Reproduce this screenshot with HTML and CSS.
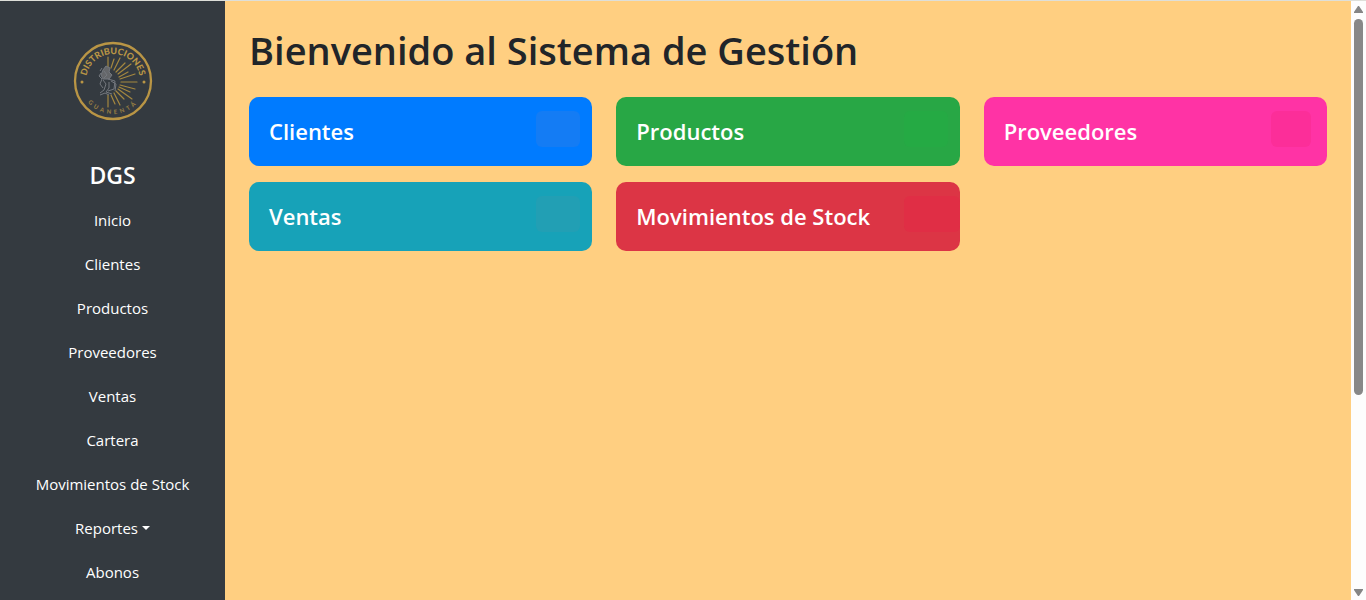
FILE: index.html
```
<!DOCTYPE html>
<html lang="es">
<head>
  <meta charset="UTF-8" />
  <meta name="viewport" content="width=device-width, initial-scale=1.0" />
  <title>Sistema de Gestión</title>
  <link rel="stylesheet" href="styles.css">
</head>
<body>
  <nav class="sidebar">
    <svg class="logo" viewBox="0 0 80 80" role="img" aria-label="Distribuciones Guanentá">
      <defs>
        <path id="arco-sup" d="M13 40 A27 27 0 0 1 67 40" />
        <path id="arco-inf" d="M7 40 A33 33 0 0 0 73 40" />
      </defs>
      <circle cx="40" cy="40" r="38" fill="none" stroke="#b99545" stroke-width="2.3" />
      <text class="logo-nombre"><textPath href="#arco-sup" startOffset="50%" text-anchor="middle">DISTRIBUCIONES</textPath></text>
      <text class="logo-lugar"><textPath href="#arco-inf" startOffset="50%" text-anchor="middle">GUANENTÁ</textPath></text>
      <circle cx="9" cy="41" r="1.5" fill="#b99545" />
      <circle cx="71" cy="41" r="1.5" fill="#b99545" />
      <!-- rayos -->
      <g stroke="#a4873f" stroke-width="1.2" stroke-linecap="round">
        <path d="M35 26V16M38 27L41 18M41 29L47 17M43 31L52 22M45 33L58 23M46 36L55 31M47 38L62 33M48 41H64M47 44L62 48M46 46L57 51M45 48L59 58M43 50L51 58M41 52L47 64M38 54L42 63M35 54V66" />
      </g>
      <!-- cacique -->
      <g fill="none" stroke="#74787e" stroke-width="1">
        <path d="M30 29L33 25L37 27L36 31L39 34L36 38H30L28 34Z" fill="#65676a" />
        <path d="M28 32L26 35L29 38L27 43L30 47M31 30L34 34L31 37M35 38L42 40L41 48L35 50M30 39L33 43L31 49L27 52M36 41V47L33 51L39 53M27 54L32 52L36 54" />
        <path d="M29 27L27 30M38 40L43 43L42 50" />
      </g>
    </svg>
    <h4>DGS</h4>
    <a href="#">Inicio</a>
    <a href="#">Clientes</a>
    <a href="#">Productos</a>
    <a href="#">Proveedores</a>
    <a href="#">Ventas</a>
    <a href="#">Cartera</a>
    <a href="#">Movimientos de Stock</a>
    <button type="button" class="dropdown-toggle">Reportes</button>
    <a href="#">Abonos</a>
  </nav>

  <main class="content">
    <h1>Bienvenido al Sistema de Gestión</h1>
    <div class="cards">
      <a href="#" class="card clientes">Clientes</a>
      <a href="#" class="card productos">Productos</a>
      <a href="#" class="card proveedores">Proveedores</a>
      <a href="#" class="card ventas">Ventas</a>
      <a href="#" class="card stock">Movimientos de Stock</a>
    </div>
  </main>

  <div class="scrollbar" aria-hidden="true">
    <svg viewBox="0 0 9 7"><path d="M4 0H5L9 6V7H0V6Z" /></svg>
    <div class="track"><div class="thumb"></div></div>
    <svg viewBox="0 0 9 7"><path d="M0 0H9V1L5 7H4L0 1Z" /></svg>
  </div>
</body>
</html>
```
FILE: styles.css
```
* {
  box-sizing: border-box;
}
body {
  margin: 0;
  height: 100vh;
  display: flex;
  overflow: hidden;
  border-top: 1px solid #dedfd9;
  background-color: #ffcf81;
  color: #212529;
  font-family: 'Segoe UI', 'Open Sans', 'Noto Sans', sans-serif;
  font-size: 15px;
  line-height: 24px;
}
.sidebar {
  width: 225px;
  flex-shrink: 0;
  display: flex;
  flex-direction: column;
  padding-top: 40px;
  background-color: #343a40;
  color: #fff;
  text-align: center;
}
.logo {
  width: 80px;
  height: 80px;
  flex-shrink: 0;
  margin: 0 auto 40px;
}
.logo text {
  fill: #b99545;
  font-family: Lato, sans-serif;
}
.logo-nombre {
  font-size: 9px;
  font-weight: 900;
}
.logo-lugar {
  font-size: 6px;
  font-weight: 900;
  letter-spacing: 3px;
  opacity: 0.7;
}
.sidebar h4 {
  margin: 0 0 8px;
  font-size: 23px;
  font-weight: 600;
  line-height: 29px;
}
.sidebar a,
.sidebar button {
  display: block;
  padding: 10px;
  border: none;
  background: none;
  color: #fff;
  font: inherit;
  text-decoration: none;
  cursor: pointer;
}
.dropdown-toggle::after {
  content: "";
  display: inline-block;
  margin-left: 4px;
  vertical-align: 4px;
  border-top: 4px solid;
  border-left: 4px solid transparent;
  border-right: 4px solid transparent;
}
.content {
  flex: 1;
  padding: 25px 24px;
}
.content h1 {
  margin: 0 0 23px;
  font-size: 38px;
  font-weight: 600;
  line-height: 48px;
}
.cards {
  display: grid;
  grid-template-columns: repeat(3, 1fr);
  gap: 16px 24px;
}
.card {
  position: relative;
  padding: 20px;
  border-radius: 10px;
  overflow: hidden;
  color: #fff;
  font-size: 22px;
  font-weight: 600;
  line-height: 29px;
  text-decoration: none;
}
.card::after {
  content: "";
  position: absolute;
  top: 14px;
  right: 12px;
  width: 44px;
  height: 36px;
  border-radius: 6px;
}
.clientes {
  background-color: #007bff;
}
.clientes::after {
  background-color: #147cf4;
}
.productos {
  background-color: #28a745;
}
.productos::after {
  background-color: #25aa44;
}
.proveedores {
  background-color: #ff33a5;
}
.proveedores::after {
  right: 16px;
  width: 40px;
  background-color: #fc2e99;
}
.ventas {
  background-color: #17a2b8;
}
.ventas::after {
  background-color: #229fb4;
}
.stock {
  background-color: #dc3545;
}
.stock::after {
  right: 0;
  width: 56px;
  background-color: #e02e45;
}
.scrollbar {
  width: 15px;
  flex-shrink: 0;
  display: flex;
  flex-direction: column;
  align-items: center;
  gap: 6px;
  padding: 5px 0 4px;
  background-color: #fdfdfd;
}
.scrollbar svg {
  width: 9px;
  height: 7px;
  fill: #858585;
}
.track {
  flex: 1;
  display: flex;
  flex-direction: column;
}
.track::after {
  content: "";
  flex: 1;
}
.thumb {
  flex: 2;
  width: 9px;
  border-radius: 5px;
  background-color: #888;
}
```
